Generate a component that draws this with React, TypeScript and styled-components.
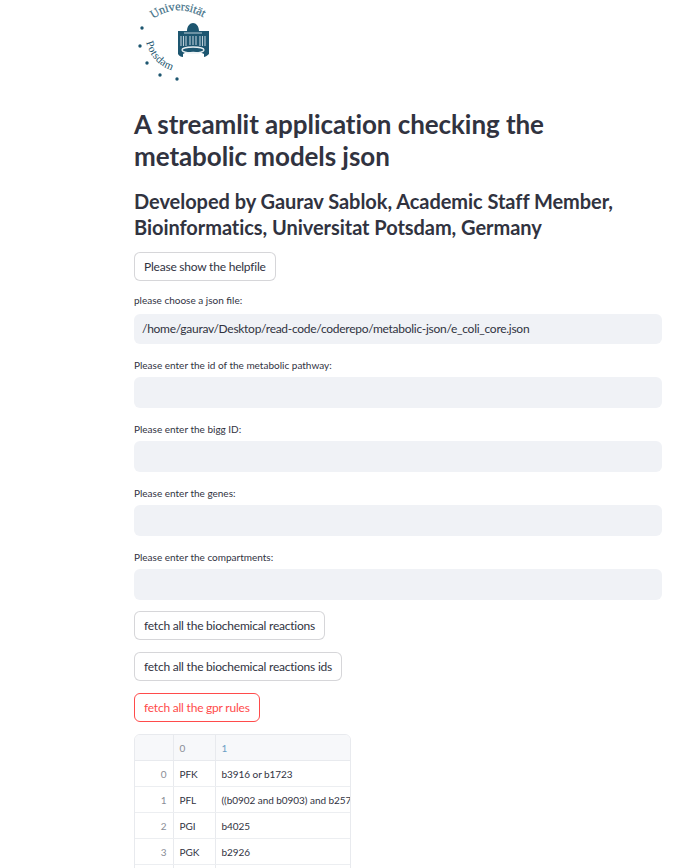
import styled, { createGlobalStyle } from "styled-components";

const GlobalStyle = createGlobalStyle`
  html, body {
    margin: 0;
    height: 868px;
    overflow: hidden;
    background: #fff;
    font-family: "Lato", "Noto Sans", sans-serif;
    color: rgb(49, 51, 63);
  }
`;

const Page = styled.main`
  width: 528px;
  margin-left: 134px;
  display: flex;
  flex-direction: column;
  align-items: flex-start;
`;

const Logo = styled.svg`
  display: block;
  width: 90px;
  height: 85px;
`;

const Title = styled.h1`
  margin: 23px 0 0;
  max-width: 440px;
  font-size: 26px;
  line-height: 32px;
  font-weight: 700;
  letter-spacing: -0.07px;
`;

const Subtitle = styled.h2`
  margin: 16px 0 0;
  font-size: 20px;
  line-height: 26px;
  font-weight: 700;
  letter-spacing: -0.05px;
`;

const Button = styled.button<{ $active?: boolean; $tight?: boolean }>`
  display: block;
  height: 29px;
  padding: 0 9px;
  background: #fff;
  border: 1px solid ${(p) => (p.$active ? "rgb(255, 75, 75)" : "rgba(49, 51, 63, 0.2)")};
  border-radius: 6px;
  color: ${(p) => (p.$active ? "rgb(255, 75, 75)" : "rgb(49, 51, 63)")};
  font: inherit;
  font-size: 12px;
  letter-spacing: -0.22px;
  margin-top: ${(p) => (p.$tight ? "11px" : "12px")};
`;

const Field = styled.div<{ $first?: boolean }>`
  width: 100%;
  margin-top: ${(p) => (p.$first ? "12px" : "14px")};
`;

const FieldLabel = styled.label<{ $first?: boolean }>`
  display: block;
  font-size: 10px;
  line-height: 14px;
  margin-bottom: ${(p) => (p.$first ? "7px" : "5px")};
`;

const FieldInput = styled.div<{ $short?: boolean }>`
  height: ${(p) => (p.$short ? "30px" : "31px")};
  line-height: 30px;
  padding: 0 8px;
  background: rgb(240, 242, 246);
  border-radius: 6px;
  font-size: 12px;
  letter-spacing: -0.28px;
`;

const TableWrap = styled.div`
  width: 217px;
  margin-top: 12px;
  border: 1px solid #e8eaee;
  border-radius: 6px 6px 0 0;
  overflow: hidden;
  box-sizing: border-box;
`;

const Frame = styled.table`
  width: 217px;
  table-layout: fixed;
  border-collapse: collapse;
  font-size: 10px;
  letter-spacing: -0.05px;
`;

const HeadCell = styled.th<{ $blue?: boolean }>`
  height: 25px;
  padding: 0 6px;
  background: #f7f8fa;
  border-right: 1px solid #e8eaee;
  border-bottom: 1px solid #e8eaee;
  color: ${(p) => (p.$blue ? "#6d9fc5" : "#8a8d96")};
  font-weight: 400;
  text-align: left;
`;

const IndexCell = styled.td`
  height: 25px;
  padding: 0 6px;
  border-right: 1px solid #e8eaee;
  border-bottom: 1px solid #eceef1;
  color: #8a8d96;
  text-align: right;
`;

const Cell = styled.td`
  height: 25px;
  padding: 0 6px;
  border-right: 1px solid #e8eaee;
  border-bottom: 1px solid #eceef1;
  white-space: nowrap;
  overflow: hidden;
`;

const LogoBlue = "#1d5670";

function UniLogo() {
  return (
    <Logo viewBox="0 0 90 85">
      <defs>
        <path id="arcTop" d="M19 19 Q 43 2 70 18" />
        <path id="arcBottom" d="M12 42 Q 19 68 46 72" />
      </defs>
      <text fontFamily="Liberation Serif, serif" fontSize="12" fill="#3f7087" stroke="#3f7087" strokeWidth="0.2">
        <textPath href="#arcTop">Universität</textPath>
      </text>
      <text fontFamily="Liberation Serif, serif" fontSize="11" letterSpacing="0.3" fill={LogoBlue}>
        <textPath href="#arcBottom">Potsdam</textPath>
      </text>
      <circle cx="8" cy="28" r="1.7" fill={LogoBlue} />
      <circle cx="6" cy="46" r="1.7" fill={LogoBlue} />
      <circle cx="13" cy="63" r="1.7" fill={LogoBlue} />
      <circle cx="26" cy="75" r="1.7" fill={LogoBlue} />
      <circle cx="43" cy="79" r="1.7" fill={LogoBlue} />
      {/* building */}
      <path
        d="M44 31h9c0-5 3-8 6-8s6 3 6 8h10v23c-2 2-4 3-5 3v-3c-5-3-17-3-21 0v3c-2 0-4-1-5-3z"
        fill={LogoBlue}
      />
      <path
        d="M47 36v10M49.500 36v10M52 36v10M66 36v10M68.500 36v10M71 36v10M56 36v9M59 36v9M62 36v9"
        stroke="#b9cdd7"
        strokeWidth="1.1"
        fill="none"
      />
      <path d="M50 33h18" stroke="#b9cdd7" strokeWidth="1" fill="none" />
      <ellipse cx="59" cy="50" rx="11" ry="3" fill="none" stroke="#e8eff2" strokeWidth="1.3" />
    </Logo>
  );
}

const rows = [
  ["PFK", "b3916 or b1723"],
  ["PFL", "((b0902 and b0903) and b2579) or (b0902 and b0903)"],
  ["PGI", "b4025"],
  ["PGK", "b2926"],
  ["PGL", "b0767"],
];

export default function App() {
  return (
    <>
      <GlobalStyle />
      <Page>
        <UniLogo />
        <Title>A streamlit application checking the metabolic models json</Title>
        <Subtitle>
          Developed by Gaurav Sablok, Academic Staff Member, Bioinformatics, Universitat Potsdam, Germany
        </Subtitle>
        <Button>Please show the helpfile</Button>
        <Field $first>
          <FieldLabel $first>please choose a json file:</FieldLabel>
          <FieldInput $short>/home/gaurav/Desktop/read-code/coderepo/metabolic-json/e_coli_core.json</FieldInput>
        </Field>
        <Field>
          <FieldLabel>Please enter the id of the metabolic pathway:</FieldLabel>
          <FieldInput />
        </Field>
        <Field>
          <FieldLabel>Please enter the bigg ID:</FieldLabel>
          <FieldInput />
        </Field>
        <Field>
          <FieldLabel>Please enter the genes:</FieldLabel>
          <FieldInput />
        </Field>
        <Field>
          <FieldLabel>Please enter the compartments:</FieldLabel>
          <FieldInput />
        </Field>
        <Button $tight>fetch all the biochemical reactions</Button>
        <Button>fetch all the biochemical reactions ids</Button>
        <Button $active>fetch all the gpr rules</Button>
        <TableWrap>
          <Frame>
            <colgroup>
              <col style={{ width: 38 }} />
              <col style={{ width: 42 }} />
              <col />
            </colgroup>
            <thead>
              <tr>
                <HeadCell />
                <HeadCell>0</HeadCell>
                <HeadCell $blue>1</HeadCell>
              </tr>
            </thead>
            <tbody>
              {rows.map((r, i) => (
                <tr key={r[0]}>
                  <IndexCell>{i}</IndexCell>
                  <Cell>{r[0]}</Cell>
                  <Cell>{r[1]}</Cell>
                </tr>
              ))}
            </tbody>
          </Frame>
        </TableWrap>
      </Page>
    </>
  );
}
